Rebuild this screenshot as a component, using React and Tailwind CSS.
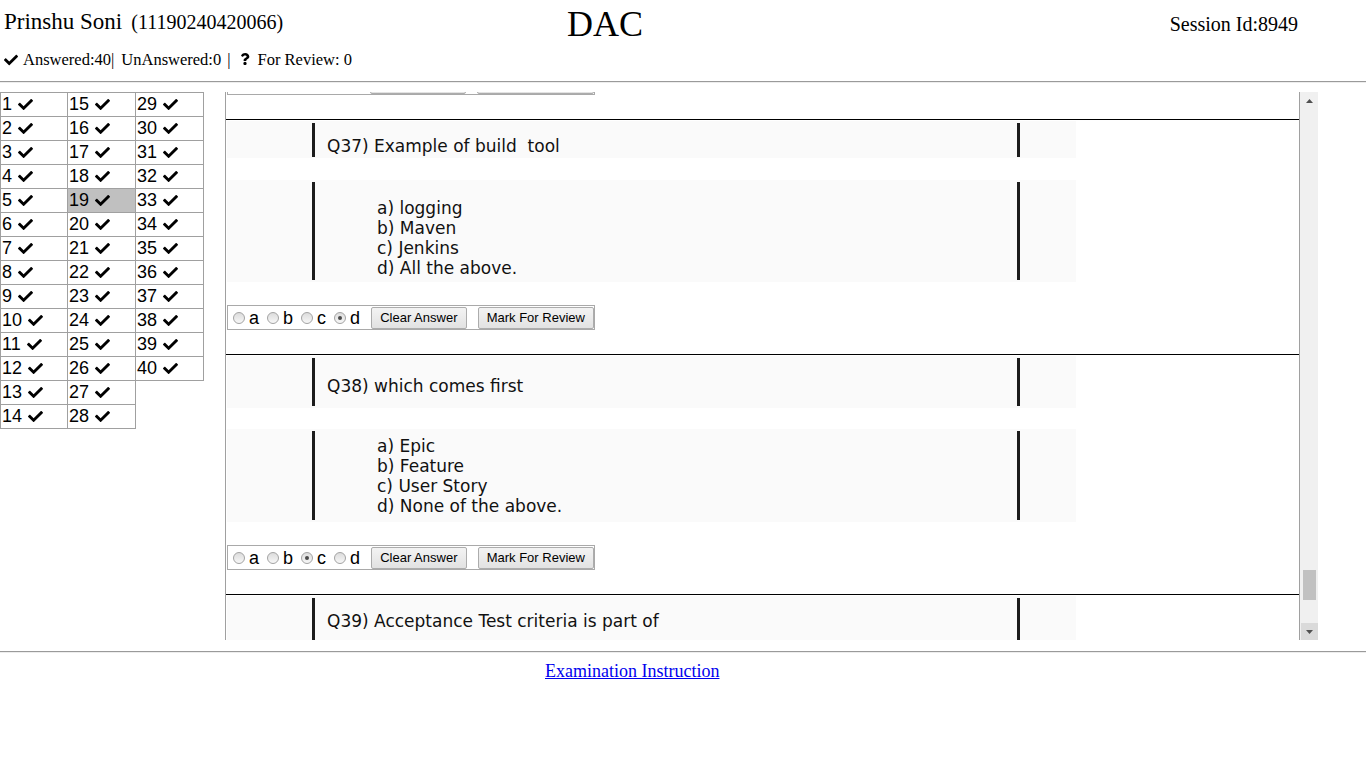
import React from "react";
import { FaCheck, FaQuestion } from "react-icons/fa";

function Radio({ checked }) {
  return (
    <span className="w-[12px] h-[12px] rounded-full border border-[#a3a3a3] bg-linear-to-b from-[#dcdcdc] to-[#f7f7f7] flex items-center justify-center">
      {checked ? <span className="w-[4px] h-[4px] rounded-full bg-[#4a4a4a]" /> : null}
    </span>
  );
}

function AnswerRow({ sel, extra }) {
  return (
    <div className={`ml-[1px] w-[368px] h-[25px] border border-[#a9a9a9] flex items-center font-['Liberation_Sans',Arial,sans-serif] text-black ${extra || ""}`}>
      {["a", "b", "c", "d"].map((l, i) => (
        <span key={l} className={`flex items-center ${i === 0 ? "ml-[5px]" : "ml-[8px]"}`}>
          <Radio checked={sel === l} />
          <span className="ml-[4px] text-[18px] leading-none">{l}</span>
        </span>
      ))}
      <span className="ml-[11px] w-[96px] h-[22px] mt-[1px] border border-[#acacac] rounded-[2px] bg-linear-to-b from-[#f3f3f3] to-[#e2e2e2] text-[13px] flex items-center justify-center">
        Clear Answer
      </span>
      <span className="ml-[11px] w-[117px] h-[22px] mt-[1px] border border-[#acacac] rounded-[2px] bg-linear-to-b from-[#f3f3f3] to-[#e2e2e2] text-[13px] flex items-center justify-center">
        Mark For Review
      </span>
    </div>
  );
}

function RemnantRow() {
  return (
    <div className="ml-[1px] w-[368px] h-[25px] border border-[#a9a9a9] flex items-center -mt-[22px] shrink-0">
      <span className="ml-[142px] w-[96px] h-[22px] mt-[1px] border border-[#acacac] rounded-[2px] bg-linear-to-b from-[#f3f3f3] to-[#e2e2e2]" />
      <span className="ml-[11px] w-[117px] h-[22px] mt-[1px] border border-[#acacac] rounded-[2px] bg-linear-to-b from-[#f3f3f3] to-[#e2e2e2]" />
    </div>
  );
}

function Panel({ hCls, barCls, padCls, mtCls, children }) {
  return (
    <div className={`ml-[1px] w-[849px] bg-[#fafafa] flex items-start shrink-0 ${hCls} ${mtCls}`}>
      <div className="w-[85px] shrink-0" />
      <div className={`w-[3px] shrink-0 bg-[#1c1c1c] ${barCls}`} />
      <div className={`w-[702px] shrink-0 font-['DejaVu_Sans',Verdana,sans-serif] text-[17px] leading-[20px] text-[#111] ${padCls}`}>
        {children}
      </div>
      <div className={`w-[3px] shrink-0 bg-[#1c1c1c] ${barCls}`} />
    </div>
  );
}

function Hr({ mtCls }) {
  return <div className={`h-px w-full bg-black shrink-0 ${mtCls}`} />;
}

function Cell({ n, hi }) {
  return (
    <div className={`h-[24px] border-b border-r border-[#a0a0a0] flex items-center pl-[1px] pb-[1px] ${hi ? "bg-[#c0c0c0]" : ""}`}>
      <span className="text-[18px] leading-none">{n}</span>
      <FaCheck size={15} className="ml-[6px]" />
    </div>
  );
}

export default function App() {
  const col1 = Array.from({ length: 14 }, (_, i) => i + 1);
  const col2 = Array.from({ length: 14 }, (_, i) => i + 15);
  const col3 = Array.from({ length: 12 }, (_, i) => i + 29);

  return (
    <div className="w-[1366px] bg-white text-black">
      {/* header */}
      <div className="font-['Liberation_Serif',serif]">
        <div className="flex items-start h-[47px]">
          <div className="w-[567px] pl-[4px] pt-[10px] flex items-baseline">
            <span className="text-[23px] leading-none">Prinshu Soni</span>
            <span className="text-[20px] leading-none ml-[9px]">(11190240420066)</span>
          </div>
          <div className="text-[36px] leading-none pt-[6px]">DAC</div>
          <div className="ml-auto pr-[68px] pt-[14px] text-[20px] leading-none">Session Id:8949</div>
        </div>
        <div className="flex items-center pl-[4px] h-[26px] text-[16.5px]">
          <FaCheck size={14} />
          <span className="ml-[5px]">Answered:40|</span>
          <span className="ml-[7px]">UnAnswered:0</span>
          <span className="ml-[6px]">|</span>
          <FaQuestion size={12} className="ml-[8px] -mt-[3px]" />
          <span className="ml-[7px]">For Review: 0</span>
        </div>
      </div>
      <div className="mt-[8px] border-t border-t-[#9a9a9a] border-b border-b-[#ededed]" />

      {/* body */}
      <div className="mt-[9px] flex items-start">
        <div className="w-[225px] shrink-0 flex items-start font-['Liberation_Sans',Arial,sans-serif]">
          <div className="w-[68px] flex flex-col border-t border-l border-[#a0a0a0]">
            {col1.map((n) => <Cell key={n} n={n} />)}
          </div>
          <div className="w-[68px] flex flex-col border-t border-[#a0a0a0]">
            {col2.map((n) => <Cell key={n} n={n} hi={n === 19} />)}
          </div>
          <div className="w-[68px] flex flex-col border-t border-[#a0a0a0]">
            {col3.map((n) => <Cell key={n} n={n} />)}
          </div>
        </div>

        <div className="w-[1093px] h-[548px] flex shrink-0">
          <div className="w-[1075px] h-full border-l border-r border-[#a0a0a0] overflow-hidden flex flex-col">
            <RemnantRow />
            <Hr mtCls="mt-[24px]" />

            <Panel hCls="h-[37px]" barCls="mt-[2px] h-[34px]" padCls="pt-[15px] pl-[12px] whitespace-pre" mtCls="mt-[1px]">
              {"Q37) Example of build  tool"}
            </Panel>
            <Panel hCls="h-[102px]" barCls="mt-[2px] h-[98px]" padCls="pt-[18px] pl-[62px]" mtCls="mt-[22px]">
              <div>a) logging</div>
              <div>b) Maven</div>
              <div>c) Jenkins</div>
              <div>d) All the above.</div>
            </Panel>
            <AnswerRow sel="d" extra="mt-[23px] shrink-0" />
            <Hr mtCls="mt-[24px]" />

            <Panel hCls="h-[52px]" barCls="mt-[2px] h-[48px]" padCls="pt-[20px] pl-[12px]" mtCls="mt-[1px]">
              Q38) which comes first
            </Panel>
            <Panel hCls="h-[93px]" barCls="mt-[2px] h-[89px]" padCls="pt-[7px] pl-[62px]" mtCls="mt-[21px]">
              <div>a) Epic</div>
              <div>b) Feature</div>
              <div>c) User Story</div>
              <div>d) None of the above.</div>
            </Panel>
            <AnswerRow sel="c" extra="mt-[23px] shrink-0" />
            <Hr mtCls="mt-[24px]" />

            <Panel hCls="h-[50px]" barCls="mt-[2px] h-[46px]" padCls="pt-[15px] pl-[12px]" mtCls="mt-[1px]">
              Q39) Acceptance Test criteria is part of
            </Panel>
          </div>

          {/* scrollbar */}
          <div className="w-[18px] h-full bg-[#f0f0f0] flex flex-col">
            <div className="h-[17px] flex items-center justify-center">
              <svg width="7" height="4" viewBox="0 0 7 4"><path d="M0 4 L3.5 0 L7 4 Z" fill="#505050" /></svg>
            </div>
            <div className="flex-1" />
            <div className="h-[30px] ml-[3px] w-[13px] bg-[#c1c1c1]" />
            <div className="h-[23px]" />
            <div className="h-[17px] ml-[1px] bg-[#dadada] flex items-center justify-center">
              <svg width="7" height="4" viewBox="0 0 7 4"><path d="M0 0 L7 0 L3.5 4 Z" fill="#505050" /></svg>
            </div>
          </div>
        </div>
      </div>

      {/* footer */}
      <div className="mt-[11px] border-t border-t-[#9a9a9a] border-b border-b-[#ededed]" />
      <div className="mt-[5px] pl-[545px] font-['Liberation_Serif',serif] text-[18px]">
        <a href="#" className="text-[#0000ee] underline">Examination Instruction</a>
      </div>
    </div>
  );
}
